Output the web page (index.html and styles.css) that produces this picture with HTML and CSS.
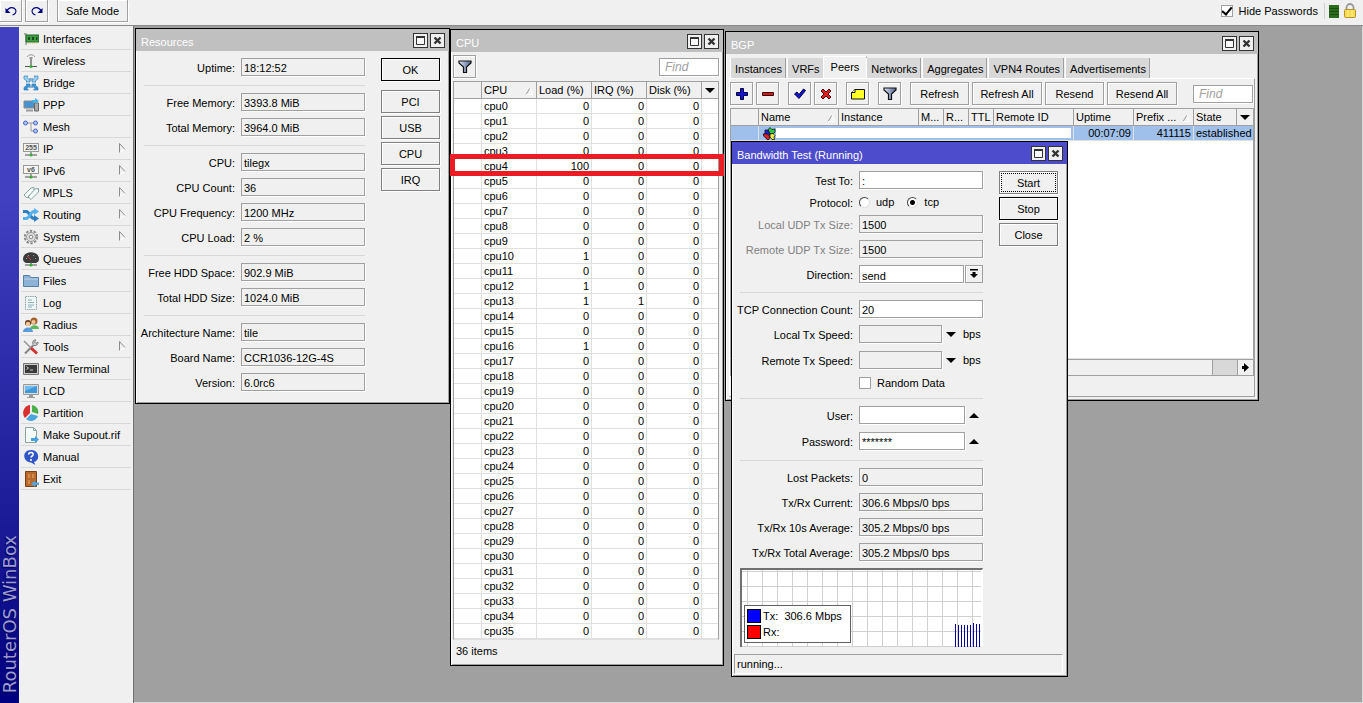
FILE: index.html
```
<!DOCTYPE html>
<html lang="en">
<head>
    <meta charset="UTF-8">
    <meta name="viewport" content="width=device-width, initial-scale=1.0">
    <title>RouterOS WinBox</title>
    <link rel="stylesheet" href="styles.css">
</head>
<body>

<!-- Shared icons -->
<svg class="icon-defs" aria-hidden="true">
    <defs>
        <linearGradient id="funnel-fill"><stop offset="0" stop-color="#dfe7f7"/><stop offset="1" stop-color="#4c5f8c"/></linearGradient>
        <symbol id="funnel" viewBox="0 0 14 14"><path d="M1 1h12v2L8.500 7v5.500h-3V7L1 3z" fill="url(#funnel-fill)" stroke="#111" stroke-width="1.200"/></symbol>
        <symbol id="maximize" viewBox="0 0 13 13"><path d="M2.500 2.500h8v8h-8z" fill="#f8f8f8" stroke="#333"/><path d="M2 3h9" stroke="#333" stroke-width="2"/></symbol>
        <symbol id="close" viewBox="0 0 13 13"><path d="M3.500 3.500l6 6M9.500 3.500l-6 6" stroke="#333" stroke-width="2.400"/></symbol>
        <symbol id="down" viewBox="0 0 10 5"><path d="M0 0h10L5 5z"/></symbol>
        <symbol id="up" viewBox="0 0 10 5"><path d="M0 5h10L5 0z"/></symbol>
        <symbol id="sort" viewBox="0 0 8 8"><path d="M1 7.500L5 1" stroke="#999" fill="none"/><path d="M5 1l2.500 6.500H1" stroke="#fff" fill="none"/></symbol>
        <symbol id="submenu" viewBox="0 0 7 10"><path d="M6 6.500L.500 9.500" fill="none" stroke="#fff"/><path d="M.500 9.500V.500L6 6.500" fill="none" stroke="#8c8c8c"/></symbol>
    </defs>
</svg>

<header class="topbar">
    <button class="tool-btn" aria-label="Undo"><svg width="14" height="14" viewBox="0 0 14 14"><path d="M3 7c1.500-4 6.500-4.500 8.500-1.500 1.500 2.500-.500 5-3 5.500" fill="none" stroke="#000080" stroke-width="1.200"/><path d="M1.500 4v5h5z" fill="#000080"/></svg></button>
    <button class="tool-btn" aria-label="Redo"><svg width="14" height="14" viewBox="0 0 14 14"><path d="M11 7c-1.500-4-6.500-4.500-8.500-1.500-1.500 2.500.500 5 3 5.500" fill="none" stroke="#000080" stroke-width="1.200"/><path d="M12.500 4v5h-5z" fill="#000080"/></svg></button>
    <button class="tool-btn safe-mode">Safe Mode</button>
    <div class="topbar-right">
        <input type="checkbox" class="check" id="hide-passwords" checked>
        <label for="hide-passwords">Hide Passwords</label>
        <span class="divider"></span>
        <svg width="10" height="13" viewBox="0 0 10 13"><path d="M0 0h10v13H0z" fill="#2d6e1e"/><path d="M0 3.500h10M0 6.500h10M0 9.500h10" stroke="#1d4f12"/></svg>
        <svg width="14" height="16" viewBox="0 0 14 16"><path d="M3.500 8V4.500a3.500 3.500 0 0 1 7 0V8" fill="none" stroke="#999" stroke-width="1.800"/><rect x="1.500" y="6.500" width="11" height="8" rx="1" fill="#f7d94c" stroke="#b8922a"/><path d="M5 7v7M9 7v7" stroke="#fff3a5"/></svg>
    </div>
</header>

<div class="main">
    <div class="brand"><span>RouterOS WinBox</span></div>

    <!-- Main menu -->
    <nav class="menu">
        <a href="#"><svg viewBox="0 0 16 16"><path d="M1 3h2v11" fill="none" stroke="#8b9a8b" stroke-width="1.400"/><path d="M3 4h13v7H3z" fill="#3f9e43" stroke="#23682a"/><path d="M5 6h2v3H5zM9 6h2v3H9zM13 6h1.500v3H13z" fill="#174d1d"/><path d="M5 12h9" stroke="#d6b84c" stroke-dasharray="1 1"/></svg>Interfaces</a>
        <a href="#"><svg viewBox="0 0 16 16"><path d="M4 4c2-3 6-3 8 0M6 5.500c1-1.500 3-1.500 4 0" fill="none" stroke="#999"/><path d="M8 5v8" stroke="#777" stroke-width="1.500"/><path d="M2 13.500h12" stroke="#555"/><circle cx="8" cy="13.500" r="1.600" fill="#35b035"/></svg>Wireless</a>
        <a href="#"><svg viewBox="0 0 16 16" stroke="#2775b5" stroke-width=".600"><path d="M1 1h4L4 2.500l3 3v-2.500 4H3l1-1-3-2z" fill="#9bd3f5"/><path d="M15 1h-4l1 1.500-3 3V3v4h4l-1-1 3-2z" fill="#9bd3f5"/><path d="M1 15h4.500L4 13.500l3-3V13 9H3l1 1-3 2.500z" fill="#3a94d4"/><path d="M15 15h-4.500l1.500-1.500-3-3V13 9h4l-1 1 3 2.500z" fill="#3a94d4"/></svg>Bridge</a>
        <a href="#"><svg viewBox="0 0 16 16"><path d="M1 4h10v7H1z" fill="#4393d3" stroke="#888"/><path d="M3 13.500h7" stroke="#999" stroke-width="2"/><path d="M11.500 6h4v8h-4z" fill="#aaa" stroke="#666"/><path d="M9 3h3V1l4 3-4 3V5H9z" fill="#45aee8"/></svg>PPP</a>
        <a href="#"><svg viewBox="0 0 16 16" fill="#a9c1f5" stroke="#4b68c0"><path d="M5 4h5M8 4v8h2" fill="none" stroke="#999"/><circle cx="2.500" cy="4" r="2"/><circle cx="12.500" cy="4" r="2"/><circle cx="12.500" cy="12" r="2"/></svg>Mesh</a>
        <a href="#"><svg viewBox="0 0 16 16"><rect x=".500" y="2.500" width="15" height="8" fill="#f5f5f5" stroke="#999"/><text x="8" y="9" class="icon-text">255</text><path d="M8 11v3M2 14h12" stroke="#555"/><circle cx="8" cy="14" r="1.500" fill="#35b035"/></svg>IP<svg class="sub" viewBox="0 0 7 10"><use href="#submenu"/></svg></a>
        <a href="#"><svg viewBox="0 0 16 16"><rect x=".500" y="2.500" width="15" height="8" fill="#f5f5f5" stroke="#999"/><text x="8" y="9" class="icon-text">v6</text><path d="M8 11v3M2 14h12" stroke="#555"/><circle cx="8" cy="14" r="1.500" fill="#35b035"/></svg>IPv6<svg class="sub" viewBox="0 0 7 10"><use href="#submenu"/></svg></a>
        <a href="#"><svg viewBox="0 0 16 16" fill="#f4faf8" stroke="#83a3a0"><path d="M1 10l7-7 3-.500V6l-7 7z"/><path d="M5 12l7-8 3.500-.500V7L8 14.500z"/></svg>MPLS<svg class="sub" viewBox="0 0 7 10"><use href="#submenu"/></svg></a>
        <a href="#"><svg viewBox="0 0 16 16"><path d="M0 4.500h3c4 0 4 7 8 7h1" fill="none" stroke="#2f7fc0" stroke-width="3"/><path d="M0 11.500h3c4 0 4-7 8-7h1" fill="none" stroke="#56b0ec" stroke-width="3"/><path d="M11 1l5 3.500L11 8z" fill="#56b0ec"/><path d="M11 8l5 3.500-5 3.500z" fill="#2f7fc0"/></svg>Routing<svg class="sub" viewBox="0 0 7 10"><use href="#submenu"/></svg></a>
        <a href="#"><svg viewBox="0 0 16 16" fill="none"><circle cx="8" cy="8" r="6.200" stroke="#8a8a8a" stroke-width="2" stroke-dasharray="2.400 1.500"/><circle cx="8" cy="8" r="4.500" stroke="#999" fill="#ddd"/><circle cx="8" cy="8" r="1.800" stroke="#888" fill="#f2f2f2"/></svg>System<svg class="sub" viewBox="0 0 7 10"><use href="#submenu"/></svg></a>
        <a href="#"><svg viewBox="0 0 16 16"><path d="M0 8c0-9 16-9 16 0 0 2-1 3-3 4H3c-2-1-3-2-3-4z" fill="#3c3c3c"/><path d="M3 8l1-1M5 4l1 1M11 4l-1 1M13 8l-1-1" stroke="#999"/><path d="M8 9L4 5" stroke="#e04040"/><path d="M8 11v3M2 14h12" stroke="#555"/><circle cx="8" cy="14" r="1.600" fill="#35b035"/></svg>Queues</a>
        <a href="#"><svg viewBox="0 0 16 16"><path d="M.500 13.500v-11h6l1 2h8v9z" fill="#8db2d6" stroke="#5580a8"/><path d="M1 6h14" stroke="#b9d3ea"/></svg>Files</a>
        <a href="#"><svg viewBox="0 0 16 16"><path d="M2.500 1.500h11v13h-11z" fill="#edf5f5" stroke="#8fa5a5" stroke-dasharray="1.500 .800"/><path d="M5 5h4M5 7.500h6M5 10h6M5 12h4" stroke="#8eb0b8"/></svg>Log</a>
        <a href="#"><svg viewBox="0 0 16 16"><circle cx="11" cy="4" r="3.500" fill="#a5642d"/><circle cx="10.500" cy="5" r="2" fill="#f4c69a"/><path d="M7 12c0-5 9-5 9 0z" fill="#5cb85c"/><circle cx="5" cy="6" r="3" fill="#6b3c1a"/><circle cx="5" cy="7" r="2.200" fill="#f4c69a"/><path d="M0 15c0-6 10-6 10 0z" fill="#5b9bd8"/></svg>Radius</a>
        <a href="#"><svg viewBox="0 0 16 16" fill="none"><path d="M2 14.500L12 4.500" stroke="#888" stroke-width="2.200"/><path d="M10 5c-1-3 1-4.500 3-4l-1.500 2 1.500 1.500 2-1.500c.500 2-1.500 4-4 3.500" fill="#ccc" stroke="#777"/><path d="M1 2l7 7" stroke="#999" stroke-width="1.600"/><path d="M8 9l6 5.500" stroke="#d43030" stroke-width="3"/></svg>Tools<svg class="sub" viewBox="0 0 7 10"><use href="#submenu"/></svg></a>
        <a href="#"><svg viewBox="0 0 16 16"><path d="M.500 2.500h15v11H.500z" fill="#ccc" stroke="#777"/><path d="M2 4h12v8H2z" fill="#3a3a3a"/><path d="M3.500 5.500l2 1.500-2 1.500M7 9h3" stroke="#eee" fill="none" stroke-width=".800"/></svg>New Terminal</a>
        <a href="#"><svg viewBox="0 0 16 16"><path d="M.500 1.500h15v10H.500z" fill="#ddd" stroke="#999"/><path d="M2 3h12v7H2z" fill="#3d97d8"/><path d="M2 8l12-5H2z" fill="#6fbdf0"/><path d="M6 12h4v2H6zM4 14h8v1H4z" fill="#999"/></svg>LCD</a>
        <a href="#"><svg viewBox="0 0 16 16"><path d="M7 8L7 0a8 8 0 0 0-5 13z" fill="#d83030"/><path d="M9 7V0a7 7 0 0 1 6 9z" fill="#4bb04b"/><path d="M8 9l7 2A7.500 7.500 0 0 1 3 14z" fill="#4aa6dc"/></svg>Partition</a>
        <a href="#"><svg viewBox="0 0 16 16"><path d="M2.500.500h8l3 3v12h-11z" fill="#f4faf8" stroke="#8ba3a0"/><path d="M10.500.500v3h3" fill="none" stroke="#8ba3a0"/><path d="M8 11h4V9l4 3.500-4 3.500v-2H8z" fill="#44a2e0"/></svg>Make Supout.rif</a>
        <a href="#"><svg viewBox="0 0 16 16"><path d="M8 1c9 0 9 11 3 12l1.500 3L8 13.500C-1 13-1 1 8 1z" fill="#2f55c8"/><path d="M5.500 5.500C6 2.500 11 3 10 6c-.500 1-2 1.500-2 2.500M8 10v2" stroke="#fff" stroke-width="1.600" fill="none"/></svg>Manual</a>
        <a href="#"><svg viewBox="0 0 16 16"><path d="M2.500.500h11v15h-11z" fill="#b8692d" stroke="#7c4216"/><path d="M5 3h2v4H5zM9 3h2v4H9zM5 9h2v4H5z" fill="#d28c4c"/><path d="M16 11.500h-4v-2L8 13l4 3v-2h4z" fill="#4aa6e4"/></svg>Exit</a>
    </nav>

    <main class="desktop">

        <!-- Resources -->
        <section class="window win-resources">
            <div class="titlebar"><span>Resources</span>
                <button class="win-btn" aria-label="Maximize"><svg><use href="#maximize"/></svg></button>
                <button class="win-btn" aria-label="Close"><svg><use href="#close"/></svg></button>
            </div>
            <div class="dialog">
                <form class="form">
                    <div class="row"><label for="uptime">Uptime:</label><input id="uptime" value="18:12:52" readonly></div>
                    <hr>
                    <div class="row"><label for="free-mem">Free Memory:</label><input id="free-mem" value="3393.8 MiB" readonly></div>
                    <div class="row"><label for="total-mem">Total Memory:</label><input id="total-mem" value="3964.0 MiB" readonly></div>
                    <hr>
                    <div class="row"><label for="cpu">CPU:</label><input id="cpu" value="tilegx" readonly></div>
                    <div class="row"><label for="cpu-count">CPU Count:</label><input id="cpu-count" value="36" readonly></div>
                    <div class="row"><label for="cpu-freq">CPU Frequency:</label><input id="cpu-freq" value="1200 MHz" readonly></div>
                    <div class="row"><label for="cpu-load">CPU Load:</label><input id="cpu-load" value="2 %" readonly></div>
                    <hr>
                    <div class="row"><label for="free-hdd">Free HDD Space:</label><input id="free-hdd" value="902.9 MiB" readonly></div>
                    <div class="row"><label for="total-hdd">Total HDD Size:</label><input id="total-hdd" value="1024.0 MiB" readonly></div>
                    <hr>
                    <div class="row"><label for="arch">Architecture Name:</label><input id="arch" value="tile" readonly></div>
                    <div class="row"><label for="board">Board Name:</label><input id="board" value="CCR1036-12G-4S" readonly></div>
                    <div class="row"><label for="version">Version:</label><input id="version" value="6.0rc6" readonly></div>
                </form>
                <div class="actions">
                    <button class="btn default ok">OK</button>
                    <button class="btn">PCI</button>
                    <button class="btn">USB</button>
                    <button class="btn">CPU</button>
                    <button class="btn">IRQ</button>
                </div>
            </div>
        </section>

        <!-- CPU -->
        <section class="window win-cpu">
            <div class="titlebar"><span>CPU</span>
                <button class="win-btn" aria-label="Maximize"><svg><use href="#maximize"/></svg></button>
                <button class="win-btn" aria-label="Close"><svg><use href="#close"/></svg></button>
            </div>
            <div class="list-body">
                <div class="toolbar">
                    <button class="tool-btn" aria-label="Filter"><svg width="14" height="14"><use href="#funnel"/></svg></button>
                    <input class="find" placeholder="Find" aria-label="Find">
                </div>
                <div class="list">
                    <table>
                        <colgroup><col class="w28"><col class="w55"><col class="w55"><col class="w55"><col class="w55"><col></colgroup>
                        <thead>
                            <tr><th></th><th>CPU<svg class="sort"><use href="#sort"/></svg></th><th>Load (%)</th><th>IRQ (%)</th><th>Disk (%)</th><th class="pick"><svg class="arrow"><use href="#down"/></svg></th></tr>
                        </thead>
                        <tbody id="cpu-rows"></tbody>
                    </table>
                </div>
                <div class="status">36 items</div>
            </div>
            <div class="highlight"></div>
        </section>

        <!-- BGP -->
        <section class="window win-bgp">
            <div class="titlebar"><span>BGP</span>
                <button class="win-btn" aria-label="Maximize"><svg><use href="#maximize"/></svg></button>
                <button class="win-btn" aria-label="Close"><svg><use href="#close"/></svg></button>
            </div>
            <div class="tabs">
                <button>Instances</button>
                <button>VRFs</button>
                <button class="active">Peers</button>
                <button>Networks</button>
                <button>Aggregates</button>
                <button>VPN4 Routes</button>
                <button>Advertisements</button>
            </div>
            <div class="tab-panel">
                <div class="toolbar">
                    <button class="tool-btn" aria-label="Add"><svg width="14" height="14" viewBox="0 0 14 14"><path d="M5.500 1.500h3v4h4v3h-4v4h-3v-4h-4v-3h4z" fill="#1414d8" stroke="#00003c"/></svg></button>
                    <button class="tool-btn" aria-label="Remove"><svg width="14" height="14" viewBox="0 0 14 14"><path d="M1.500 5.500h11v3h-11z" fill="#c81e1e" stroke="#400"/></svg></button>
                    <button class="tool-btn group" aria-label="Enable"><svg width="14" height="14" viewBox="0 0 14 14"><path d="M1.500 7L4 5l2 2.500L10.500 2l2 1.500L6 11.500z" fill="#1414d8" stroke="#00003c"/></svg></button>
                    <button class="tool-btn" aria-label="Disable"><svg width="14" height="14" viewBox="0 0 14 14"><path d="M2 4l2-2 3 3 3-3 2 2-3 3 3 3-2 2-3-3-3 3-2-2 3-3z" fill="#e01e1e" stroke="#400"/></svg></button>
                    <button class="tool-btn group" aria-label="Comment"><svg width="14" height="14" viewBox="0 0 14 14"><path d="M.500 12V5.500L4 2.500h9.500V12z" fill="#ffff28" stroke="#111"/><path d="M.500 5.500H4v-3" fill="#fff" stroke="#111"/></svg></button>
                    <button class="tool-btn group" aria-label="Filter"><svg width="14" height="14"><use href="#funnel"/></svg></button>
                    <button class="tool-btn text group">Refresh</button>
                    <button class="tool-btn text wide">Refresh All</button>
                    <button class="tool-btn text">Resend</button>
                    <button class="tool-btn text wide">Resend All</button>
                    <input class="find" placeholder="Find" aria-label="Find">
                </div>
                <div class="list peers">
                    <table>
                        <colgroup><col class="w28"><col class="w80"><col class="w80"><col class="w25"><col class="w25"><col class="w25"><col class="w80"><col class="w60"><col class="w60"><col class="w43"><col></colgroup>
                        <thead>
                            <tr><th></th><th>Name<svg class="sort"><use href="#sort"/></svg></th><th>Instance</th><th>M...</th><th>R...</th><th>TTL</th><th>Remote ID</th><th>Uptime</th><th>Prefix ...<svg class="sort"><use href="#sort"/></svg></th><th>State</th><th class="pick"><svg class="arrow"><use href="#down"/></svg></th></tr>
                        </thead>
                        <tbody>
                            <tr class="selected">
                                <td></td>
                                <td colspan="6"><div class="peer"><svg width="13" height="13" viewBox="0 0 13 13" stroke="#111" stroke-width=".800"><path d="M5 3l2-2.500 2 2 3-.500v3l-2 2H7z" fill="#30c840"/><path d="M2 3h3l2 4-2 2-4-2 1-1.500z" fill="#2020e0"/><path d="M.500 7L4 7l3 2-1 3.500H4L3 11 .500 9z" fill="#e02020"/><path d="M7 7l3-.500 2 2-1 1.500.500 2.500H9L7 10z" fill="#f8f040"/></svg><span></span></div></td>
                                <td class="num">00:07:09</td>
                                <td class="num">411115</td>
                                <td colspan="2">established</td>
                            </tr>
                        </tbody>
                    </table>
                </div>
                <div class="scrollbar"><span class="thumb"></span><button aria-label="Scroll right"><svg width="9" height="9" viewBox="0 0 9 9"><path d="M1 3h2V0l5 4.500L3 9V6H1z"/></svg></button></div>
                <div class="panel-foot"></div>
            </div>
        </section>

        <!-- Bandwidth Test -->
        <section class="window win-bandwidth active">
            <div class="titlebar"><span>Bandwidth Test (Running)</span>
                <button class="win-btn" aria-label="Maximize"><svg><use href="#maximize"/></svg></button>
                <button class="win-btn" aria-label="Close"><svg><use href="#close"/></svg></button>
            </div>
            <div class="dialog">
                <form class="form">
                    <div class="row"><label for="test-to">Test To:</label><input id="test-to" value=":"></div>
                    <div class="row radios"><span class="caption">Protocol:</span>
                        <div class="field">
                            <input type="radio" name="protocol" id="udp"><label for="udp">udp</label>
                            <input type="radio" name="protocol" id="tcp" checked><label for="tcp">tcp</label>
                        </div>
                    </div>
                    <div class="row off"><label for="local-udp">Local UDP Tx Size:</label><input id="local-udp" value="1500" readonly></div>
                    <div class="row off"><label for="remote-udp">Remote UDP Tx Size:</label><input id="remote-udp" value="1500" readonly></div>
                    <div class="row"><label for="direction">Direction:</label>
                        <div class="field combo">
                            <select id="direction"><option>send</option><option>receive</option><option>both</option></select>
                            <span class="drop"><svg width="10" height="10" viewBox="0 0 10 10"><path d="M1 0h8v1.500H1zM3.500 3h3v2H9L5 9 1 5h2.500z"/></svg></span>
                        </div>
                    </div>
                    <hr>
                    <div class="row"><label for="tcp-count">TCP Connection Count:</label><input id="tcp-count" value="20"></div>
                    <div class="row tall"><label for="local-speed">Local Tx Speed:</label>
                        <div class="field speed"><input id="local-speed" readonly><svg class="arrow"><use href="#down"/></svg><span>bps</span></div>
                    </div>
                    <div class="row tall"><label for="remote-speed">Remote Tx Speed:</label>
                        <div class="field speed"><input id="remote-speed" readonly><svg class="arrow"><use href="#down"/></svg><span>bps</span></div>
                    </div>
                    <div class="row radios"><span></span>
                        <div class="field"><input type="checkbox" class="check" id="random"><label for="random">Random Data</label></div>
                    </div>
                    <hr>
                    <div class="row tall"><label for="user">User:</label>
                        <div class="field login"><input id="user"><svg class="arrow"><use href="#up"/></svg></div>
                    </div>
                    <div class="row tall"><label for="password">Password:</label>
                        <div class="field login"><input id="password" value="*******"><svg class="arrow"><use href="#up"/></svg></div>
                    </div>
                    <hr>
                    <div class="row"><label for="lost">Lost Packets:</label><input id="lost" value="0" readonly></div>
                    <div class="row"><label for="current">Tx/Rx Current:</label><input id="current" value="306.6 Mbps/0 bps" readonly></div>
                    <div class="row"><label for="avg10">Tx/Rx 10s Average:</label><input id="avg10" value="305.2 Mbps/0 bps" readonly></div>
                    <div class="row"><label for="avg">Tx/Rx Total Average:</label><input id="avg" value="305.2 Mbps/0 bps" readonly></div>
                    <div class="graph">
                        <svg width="239" height="77" viewBox="0 0 239 77" shape-rendering="crispEdges">
                            <defs><pattern id="grid" x="5" y="1" width="15" height="15" patternUnits="userSpaceOnUse"><path d="M0 0h15v1H1v14H0z" fill="#d0d0d0"/></pattern></defs>
                            <path d="M0 0h239v77H0z" fill="url(#grid)"/>
                            <path d="M213.500 77V54M216.500 77V55M219.500 77V55M222.500 77V55M225.500 77V55M228.500 77V55M231.500 77V53M234.500 77V54M237.500 77V54" stroke="#0000a0"/>
                        </svg>
                        <div class="legend">
                            <div><i class="tx"></i>Tx:&nbsp; 306.6 Mbps</div>
                            <div><i class="rx"></i>Rx:</div>
                        </div>
                    </div>
                </form>
                <div class="actions">
                    <button class="btn focused">Start</button>
                    <button class="btn default">Stop</button>
                    <button class="btn">Close</button>
                </div>
            </div>
            <div class="status boxed">running...</div>
        </section>

    </main>
</div>

<script>
    // load and irq for the cores that are not idle
    const busy = { 4: [100, 0], 10: [1, 0], 12: [1, 0], 13: [1, 1], 16: [1, 0] };
    const rows = document.getElementById("cpu-rows");

    for (let i = 0; i < 36; i++) {
        const [load, irq] = busy[i] || [0, 0];
        const tr = document.createElement("tr");
        tr.innerHTML = `<td></td><td>cpu${i}</td><td class="num">${load}</td><td class="num">${irq}</td><td class="num">0</td><td></td>`;
        rows.appendChild(tr);
    }
</script>
</body>
</html>
```

FILE: styles.css
```
* {
    box-sizing: border-box;
}
body {
    margin: 0;
    height: 100vh;
    display: flex;
    flex-direction: column;
    overflow: hidden;
    background: #f0f0f0;
    color: #000;
    font-family: "Liberation Sans", Arial, sans-serif;
    font-size: 11px;
    line-height: 14px;
}
button, input, select {
    font: inherit;
    color: inherit;
    border-radius: 0;
    margin: 0;
}
svg {
    display: block;
    flex: none;
}
.icon-defs {
    position: absolute;
    width: 0;
    height: 0;
}

/* Top bar */
.topbar {
    display: flex;
    align-items: flex-start;
    gap: 3px;
    height: 26px;
    flex: none;
    border-bottom: 1px solid #8a8a8a;
}
.topbar .tool-btn {
    height: 22px;
    border-top: 0;
}
.topbar .tool-btn:first-child {
    width: 22px;
    border-left: 0;
}
.topbar .safe-mode {
    width: 71px;
    margin-left: 6px;
}
.topbar-right {
    display: flex;
    align-items: center;
    gap: 4px;
    height: 22px;
    margin-left: auto;
    padding-right: 6px;
}
.divider {
    width: 1px;
    height: 16px;
    margin-left: 2px;
    background: #d0d0d0;
}

/* Buttons */
.tool-btn {
    display: flex;
    align-items: center;
    justify-content: center;
    width: 23px;
    height: 23px;
    padding: 0;
    background: #f0f0f0;
    border: 1px solid #a0a0a0;
    box-shadow: inset 1px 1px 0 #fff, 1px 1px 0 #fff;
}
.btn {
    height: 23px;
    padding: 0;
    background: #f0f0f0;
    border: 1px solid #808080;
    box-shadow: inset 1px 1px 0 #fff, 1px 1px 0 #fff;
}
.btn.default {
    border-color: #000;
}
.btn.focused {
    outline: 1px dotted #000;
    outline-offset: -3px;
}

/* Left side */
.main {
    flex: 1;
    display: flex;
    min-height: 0;
}
.brand {
    width: 19px;
    flex: none;
    display: flex;
    align-items: flex-end;
    margin-top: 1px;
    padding-bottom: 10px;
    background: linear-gradient(#4040c0, #4040c0 25%, #1c1c98 72%, #000080);
}
.brand span {
    writing-mode: vertical-rl;
    transform: rotate(180deg);
    font-family: "DejaVu Sans", sans-serif;
    font-size: 18px;
    line-height: 19px;
    color: #9c9cd0;
    text-shadow: -1px -1px 1px #000050;
}
.menu {
    width: 115px;
    flex: none;
    padding: 2px 2px 0;
    border-right: 1px solid #707070;
}
.menu a {
    display: flex;
    align-items: center;
    gap: 4px;
    height: 22px;
    padding-left: 2px;
    color: #000;
    text-decoration: none;
    border-bottom: 1px solid #d8d8d8;
}
.menu a svg {
    width: 16px;
    height: 16px;
}
.menu a .sub {
    width: 7px;
    height: 10px;
    margin: 0 5px 2px auto;
}
.icon-text {
    font-size: 7px;
    font-weight: bold;
    text-anchor: middle;
    fill: #555;
}

/* Windows */
.desktop {
    flex: 1;
    position: relative;
    overflow: hidden;
    background: #a0a0a0;
    border-right: 1px solid #d8d8d8;
    border-bottom: 1px solid #d8d8d8;
}
.window {
    position: absolute;
    background: #f0f0f0;
    border: 1px solid #000;
    box-shadow: inset 1px 1px 0 #fff, inset -1px -1px 0 #a0a0a0;
}
.win-resources {
    left: 1px;
    top: 2px;
    width: 315px;
}
.win-cpu {
    left: 316px;
    top: 3px;
    width: 274px;
}
.win-bgp {
    left: 591px;
    top: 5px;
    width: 534px;
}
.win-bandwidth {
    left: 597px;
    top: 115px;
    width: 337px;
}
.titlebar {
    display: flex;
    align-items: center;
    gap: 2px;
    height: 22px;
    padding: 0 4px 0 5px;
    background: #c0c0c0;
    color: #fff;
}
.titlebar span {
    flex: 1;
    padding-top: 4px;
}
.active .titlebar {
    background: #4c4ccc;
}
.win-btn {
    width: 15px;
    height: 15px;
    padding: 0;
    background: #f0f0f0;
    border: 1px solid #333;
}
.win-btn svg {
    width: 13px;
    height: 13px;
}

/* Dialog forms */
.dialog {
    display: flex;
    gap: 16px;
    padding: 7px 9px 0 8px;
}
.win-resources .dialog {
    padding-bottom: 12px;
}
.form {
    flex: 1;
    min-width: 0;
    display: flex;
    flex-direction: column;
    gap: 7px;
}
.form hr {
    width: 100%;
    height: 1px;
    margin: 2px 0 0;
    border: 0;
    background: #d8d8d8;
}
.row {
    display: grid;
    grid-template-columns: minmax(0, 1fr) 124px;
    gap: 6px;
    height: 18px;
    line-height: 20px;
    white-space: nowrap;
}
.row > label, .caption {
    justify-self: end;
}
.row.tall {
    height: 19px;
}
.row.radios {
    height: 12px;
    line-height: 14px;
}
.row.off > label {
    color: #808080;
}
.row input:not([type]), .find, .combo select {
    width: 100%;
    min-width: 0;
    height: 18px;
    padding: 1px 2px 0;
    background: #fff;
    border: 1px solid #a0a0a0;
    box-shadow: 1px 1px 0 #fff;
    outline: 0;
}
.row input[readonly] {
    background: #f0f0f0;
}
.field {
    display: flex;
    align-items: center;
    height: 18px;
}
.radios .field {
    height: 12px;
}
.arrow {
    width: 10px;
    height: 5px;
}
.row .speed input {
    width: 83px;
    margin-right: 4px;
}
.speed span {
    margin-left: 7px;
}
.row .login input {
    width: 106px;
    margin-right: 4px;
}
.combo {
    gap: 1px;
}
.combo select {
    appearance: none;
    width: 105px;
    padding: 0 2px;
}
.drop {
    display: flex;
    align-items: center;
    justify-content: center;
    flex: 1;
    height: 18px;
    border: 1px solid #a0a0a0;
    box-shadow: inset 1px 1px 0 #fff;
}
input[type="radio"] {
    appearance: none;
    width: 11px;
    height: 11px;
    background: #fff;
    border: 1px solid;
    border-color: #444 #e0e0e0 #e0e0e0 #444;
    border-radius: 50%;
}
input[type="radio"]:checked {
    background: radial-gradient(#000 0 2px, #fff 3px);
}
.radios input[type="radio"] + label {
    margin: 0 13px 0 6px;
}
.check {
    appearance: none;
    display: grid;
    place-items: center;
    width: 12px;
    height: 12px;
    background: #fff;
    border: 1px solid #a0a0a0;
}
.check:checked::before {
    content: "";
    width: 4px;
    height: 8px;
    margin-top: -2px;
    border: solid #000;
    border-width: 0 2px 2px 0;
    transform: rotate(40deg);
}
.check + label {
    margin-left: 6px;
}
.topbar .check + label {
    margin-left: 2px;
}
.actions {
    width: 59px;
    flex: none;
    display: flex;
    flex-direction: column;
    gap: 3px;
}
.actions .ok {
    margin-bottom: 6px;
}

/* Lists */
.list-body {
    padding: 3px 4px 0 2px;
}
.toolbar {
    display: flex;
    align-items: center;
    gap: 3px;
    margin-bottom: 3px;
}
.toolbar .text {
    width: 59px;
}
.toolbar .wide {
    width: 70px;
}
.toolbar .group {
    margin-left: 6px;
}
.toolbar .find {
    width: 60px;
    margin-left: auto;
    padding-left: 5px;
    font-size: 12px;
    font-style: italic;
}
.find::placeholder {
    color: #a0a0a0;
}
.list {
    background: #fff;
    border: 1px solid #a0a0a0;
    border-bottom-color: #e0e0e0;
}
table {
    width: 100%;
    table-layout: fixed;
    border-spacing: 0;
}
th, td {
    padding: 0 2px;
    text-align: left;
    font-weight: normal;
    white-space: nowrap;
    overflow: hidden;
    border-right: 1px solid #e0e0e0;
    border-bottom: 1px solid #e0e0e0;
}
th {
    position: relative;
    height: 17px;
    background: #f0f0f0;
    border-color: #a0a0a0;
}
th:last-child, td:last-child {
    border-right: 0;
}
td {
    height: 15px;
    line-height: 14px;
}
td.num {
    text-align: right;
}
.sort {
    position: absolute;
    right: 3px;
    top: 5px;
    width: 8px;
    height: 8px;
}
.pick {
    padding: 0 3px;
}
.w25 { width: 25px; }
.w28 { width: 28px; }
.w43 { width: 43px; }
.w55 { width: 55px; }
.w60 { width: 60px; }
.w80 { width: 80px; }
.status {
    padding: 4px 3px 7px;
}
.status.boxed {
    margin: 7px 4px 2px 2px;
    padding: 3px 2px 2px;
    line-height: 13px;
    border: 1px solid;
    border-color: #a0a0a0 #fff #fff #a0a0a0;
}
.highlight {
    position: absolute;
    left: -1px;
    right: -1px;
    top: 124px;
    height: 22px;
    border: 5px solid #ed1c24;
}

/* BGP */
.tabs {
    display: flex;
    align-items: flex-end;
    gap: 2px;
    height: 24px;
    padding-left: 5px;
}
.tabs button {
    height: 20px;
    padding: 2px 3px 0 4px;
    background: #d8d8d8;
    border: 0;
    border-right: 1px solid #a0a0a0;
    box-shadow: -1px 0 0 #fff;
}
.tabs .active {
    height: 22px;
    padding: 0 7px 2px;
    margin: 0 -2px;
    background: #f0f0f0;
    border-top: 1px solid #fff;
}
.tab-panel {
    margin: 0 3px 3px;
    padding-top: 3px;
    border: 1px solid;
    border-color: #fff #a0a0a0 #a0a0a0 #fff;
}
.tab-panel .toolbar {
    margin-right: 1px;
}
.peers {
    height: 251px;
}
.selected td {
    background: #9fc0ea;
}
.peer {
    display: flex;
    align-items: center;
    height: 14px;
    padding-left: 2px;
}
.peer span {
    flex: 1;
    height: 10px;
    background: #fff;
}
.scrollbar {
    display: flex;
    height: 17px;
    background: #d8d8d8;
    border: 1px solid #a0a0a0;
}
.scrollbar .thumb {
    flex: 1;
    margin-right: 24px;
    background: #f0f0f0;
    border-right: 1px solid #a0a0a0;
}
.scrollbar button {
    display: grid;
    place-items: center;
    width: 16px;
    padding: 0;
    background: #f0f0f0;
    border: 0;
    border-left: 1px solid #a0a0a0;
}
.panel-foot {
    height: 20px;
}

/* Traffic graph */
.graph {
    position: relative;
    height: 79px;
    border: 2px solid;
    border-width: 2px 1px 0 2px;
    border-color: #707070 #fff #fff #707070;
    background: #fff;
}
.legend {
    position: absolute;
    left: 2px;
    bottom: 4px;
    width: 107px;
    height: 38px;
    padding: 3px 2px;
    display: flex;
    flex-direction: column;
    gap: 2px;
    background: #fff;
    border: 1px solid #606060;
}
.legend div {
    display: flex;
    align-items: center;
    gap: 2px;
}
.legend i {
    width: 14px;
    height: 14px;
    border: 1px solid #000;
}
.legend .tx { background: #0000ff; }
.legend .rx { background: #ff0000; }
```
